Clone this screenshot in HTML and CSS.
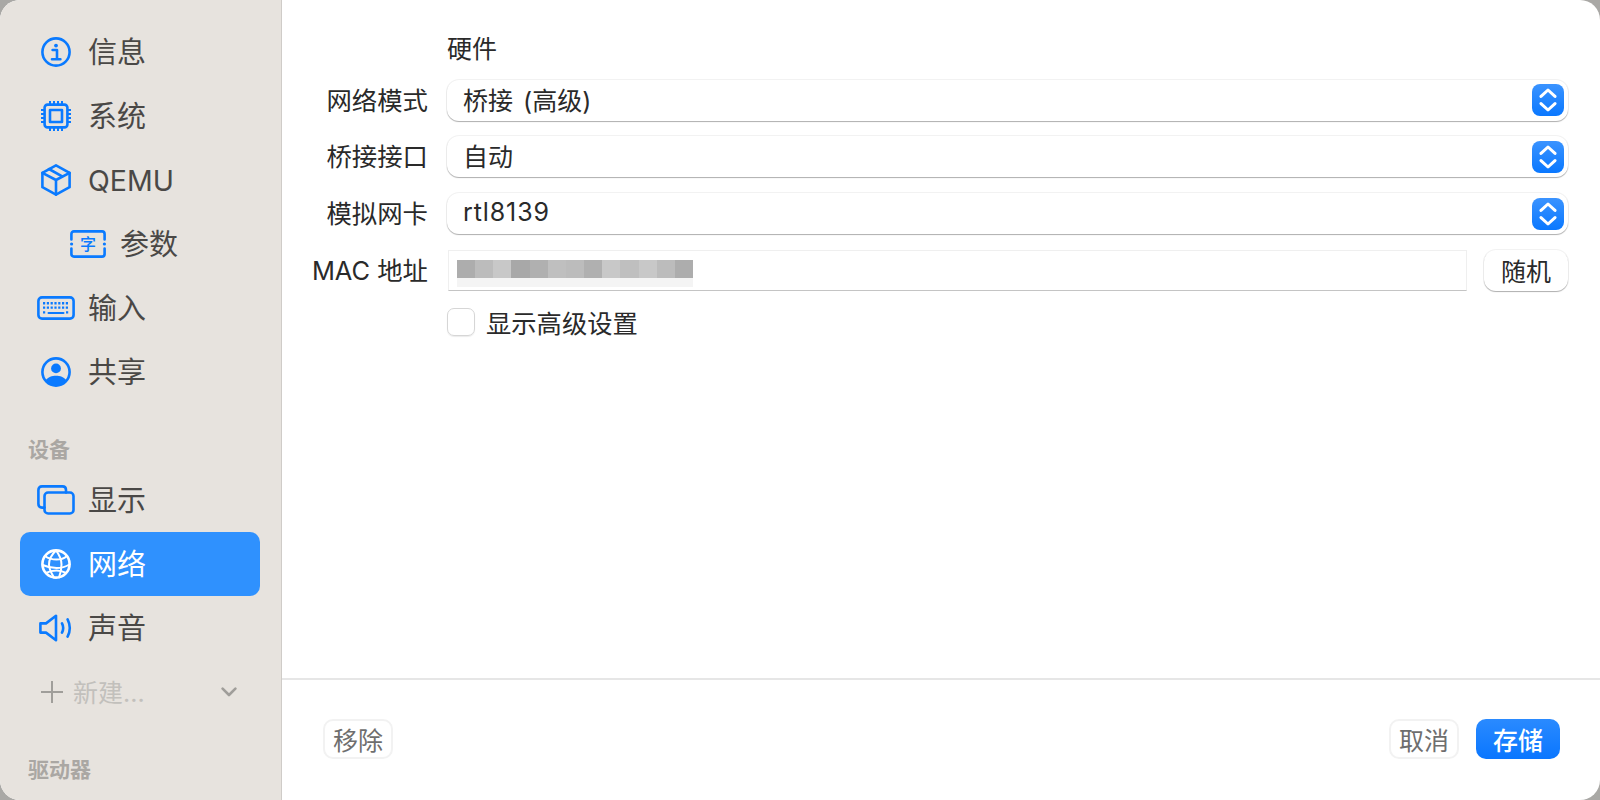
FILE: index.html
```html
<!DOCTYPE html>
<html lang="zh-CN">
<head>
    <meta charset="UTF-8">
    <title>网络</title>
    <link rel="stylesheet" href="styles.css">
</head>
<body>
    <div class="window">
        <div class="sidebar">
            <div class="nav-row">
                <span class="nav-icon">
                    <svg width="30" height="30" viewBox="0 0 30 30">
                        <circle cx="15" cy="15" r="13.6" class="line"/>
                        <circle cx="15" cy="8.6" r="1.9" class="solid"/>
                        <path d="M11.6 13h4.4v9M11 22.2h8.4" class="line"/>
                    </svg>
                </span>
                <span class="nav-text">信息</span>
            </div>
            <div class="nav-row">
                <span class="nav-icon">
                    <svg width="30" height="30" viewBox="0 0 30 30">
                        <rect x="3.6" y="3.6" width="22.8" height="22.8" rx="3" class="line"/>
                        <rect x="9" y="9" width="12" height="12" class="line"/>
                        <path d="M9 0.4v2.6M13 0.4v2.6M17 0.4v2.6M21 0.4v2.6M9 27v2.6M13 27v2.6M17 27v2.6M21 27v2.6M0.4 9h2.6M0.4 13h2.6M0.4 17h2.6M0.4 21h2.6M27 9h2.6M27 13h2.6M27 17h2.6M27 21h2.6" class="line thin"/>
                    </svg>
                </span>
                <span class="nav-text">系统</span>
            </div>
            <div class="nav-row">
                <span class="nav-icon">
                    <svg width="30" height="32" viewBox="0 0 30 32">
                        <path d="M15 1.4 28.6 8.8V23.2L15 30.6 1.4 23.2V8.8Z" class="line"/>
                        <path d="M1.4 8.8 15 16 28.6 8.8M15 16V30.6M8 5 21.6 12.6" class="line"/>
                    </svg>
                </span>
                <span>QEMU</span>
            </div>
            <div class="nav-row sub-row">
                <span class="nav-icon">
                    <svg width="36" height="28" viewBox="0 0 36 28">
                        <path d="M1.4 9.5V4Q1.4 1.4 4 1.4H32Q34.6 1.4 34.6 4V9.5M34.6 18.5V24Q34.6 26.6 32 26.6H4Q1.4 26.6 1.4 24V18.5" class="line"/>
                        <circle cx="1.6" cy="14" r="1.6" class="solid"/>
                        <circle cx="34.4" cy="14" r="1.6" class="solid"/>
                        <text x="18" y="20" class="icon-char">字</text>
                    </svg>
                </span>
                <span class="nav-text">参数</span>
            </div>
            <div class="nav-row">
                <span class="nav-icon">
                    <svg width="38" height="24" viewBox="0 0 38 24">
                        <rect x="1.4" y="1.4" width="35.2" height="21.2" rx="3.6" class="line"/>
                        <path d="M6 7.2h26M6 11.6h26M6 16.4h3M29 16.4h3" class="line dots"/>
                        <path d="M11.5 17h15" class="line thin"/>
                    </svg>
                </span>
                <span class="nav-text">输入</span>
            </div>
            <div class="nav-row">
                <span class="nav-icon">
                    <svg width="30" height="30" viewBox="0 0 30 30">
                        <circle cx="15" cy="15" r="13.6" class="line"/>
                        <circle cx="15" cy="11.4" r="4.9" class="solid"/>
                        <path d="M4.6 23.6C7 20 11 18.8 15 18.8S23 20 25.4 23.6C22.8 26.6 19 28.4 15 28.4S7.2 26.6 4.6 23.6Z" class="solid"/>
                    </svg>
                </span>
                <span class="nav-text">共享</span>
            </div>

            <div class="nav-section">设备</div>

            <div class="nav-row">
                <span class="nav-icon">
                    <svg width="38" height="30" viewBox="0 0 38 30">
                        <path d="M7.5 22.6H5Q1.4 22.6 1.4 19V5Q1.4 1.4 5 1.4H25.5Q29 1.4 29 5V7.5" class="line"/>
                        <rect x="7.5" y="7.5" width="29" height="21" rx="3.6" class="line"/>
                    </svg>
                </span>
                <span class="nav-text">显示</span>
            </div>
            <div class="nav-row active">
                <span class="nav-icon">
                    <svg width="30" height="30" viewBox="0 0 30 30">
                        <circle cx="15" cy="15" r="13.6" class="line"/>
                        <path d="M15 1.4C10 6 8 10.5 8 15.5S10.5 24.5 13 28.6M15 1.4C18.5 6 20.5 10.5 20.5 15.5S19.5 24.5 18 28.4" class="line thin"/>
                        <path d="M4 7C8 10 12 10.6 15.5 10.6S22.5 10 26 7M1.6 16C6 18 11 19 15.5 19S24.5 18 28.4 15.5M5 24C8 22.4 12 21.6 15.5 21.6S22 22.4 25 24" class="line thin"/>
                    </svg>
                </span>
                <span class="nav-text">网络</span>
            </div>
            <div class="nav-row">
                <span class="nav-icon">
                    <svg width="34" height="28" viewBox="0 0 34 28">
                        <path d="M1.4 9.4H7L17 1.8V26.2L7 18.6H1.4Z" class="line"/>
                        <path d="M23 9.4Q25.4 14 23 18.6M28.6 5.4Q33 14 28.6 22.6" class="line"/>
                    </svg>
                </span>
                <span class="nav-text">声音</span>
            </div>
            <div class="nav-row new-row">
                <svg class="plus" width="22" height="22" viewBox="0 0 22 22">
                    <path d="M11 0.5V21.5M0.5 11H21.5" class="line"/>
                </svg>
                <span class="new-text">新建...</span>
                <svg class="chevron" width="16" height="10" viewBox="0 0 16 10">
                    <path d="M1.6 1.6 8 8 14.4 1.6" class="line"/>
                </svg>
            </div>

            <div class="nav-section">驱动器</div>
        </div>

        <div class="main">
            <div class="form">
                <div></div>
                <div class="heading">硬件</div>

                <div class="label">网络模式</div>
                <div class="select">
                    <span class="value">桥接 (高级)</span>
                    <span class="stepper">
                        <svg width="18" height="24" viewBox="0 0 18 24"><path d="M2 8.4 9 2 16 8.4M2 15.6 9 22 16 15.6"/></svg>
                    </span>
                </div>

                <div class="label">桥接接口</div>
                <div class="select">
                    <span class="value">自动</span>
                    <span class="stepper">
                        <svg width="18" height="24" viewBox="0 0 18 24"><path d="M2 8.4 9 2 16 8.4M2 15.6 9 22 16 15.6"/></svg>
                    </span>
                </div>

                <div class="label">模拟网卡</div>
                <div class="select">
                    <span class="value latin">rtl8139</span>
                    <span class="stepper">
                        <svg width="18" height="24" viewBox="0 0 18 24"><path d="M2 8.4 9 2 16 8.4M2 15.6 9 22 16 15.6"/></svg>
                    </span>
                </div>

                <div class="label">MAC 地址</div>
                <div class="mac-row">
                    <div class="mac-field">
                        <div class="mosaic">
                            <i class="c1"></i><i class="c2"></i><i class="c3"></i><i class="c4"></i><i class="c5"></i><i class="c6"></i><i class="c2"></i><i class="c5"></i><i class="c3"></i><i class="c6"></i><i class="c3"></i><i class="c2"></i><i class="c1"></i>
                        </div>
                        <div class="mosaic-shadow"></div>
                    </div>
                    <div class="btn random">随机</div>
                </div>

                <div></div>
                <div class="check-row">
                    <span class="checkbox"></span>
                    <span class="check-text">显示高级设置</span>
                </div>
            </div>

            <div class="footer">
                <div class="btn ghost">移除</div>
                <div class="footer-right">
                    <div class="btn ghost">取消</div>
                    <div class="btn primary">存储</div>
                </div>
            </div>
        </div>
    </div>
</body>
</html>
```
FILE: styles.css
```css
body {
    margin: 0;
    background-color: #a9a8a5;
    font-family: Inter, "Noto Sans CJK SC", sans-serif;
    overflow: hidden;
}

.window {
    display: flex;
    height: 800px;
    border-radius: 20px;
    overflow: hidden;
    background-color: white;
}

/* sidebar */
.sidebar {
    width: 240px;
    flex-shrink: 0;
    padding: 20px 21px 0 20px;
    background-color: #e7e3de;
    border-right: 1px solid #cfccc8;
    color: #4a4846;
    font-size: 28.5px;
}

.nav-row {
    display: flex;
    align-items: center;
    gap: 13px;
    height: 64px;
    padding-left: 17px;
    border-radius: 10px;
    color: #4a4846;
}

.nav-text {
    margin-bottom: 4px;
    font-size: 29px;
}

.nav-row.sub-row {
    padding-left: 49px;
}

.nav-row.active {
    background-color: #2f91fe;
    color: white;
}

.nav-icon {
    display: flex;
    align-items: center;
    justify-content: center;
    width: 38px;
    color: #0a7aff;
}

.active .nav-icon {
    color: white;
}

.nav-section {
    height: 36px;
    padding: 28px 0 0 8px;
    line-height: 36px;
    font-size: 21px;
    font-weight: 700;
    color: #aaa7a3;
}

.line {
    fill: none;
    stroke: currentColor;
    stroke-width: 2.6;
    stroke-linecap: round;
    stroke-linejoin: round;
}

.line.thin {
    stroke-width: 2;
}

.line.dots {
    stroke-width: 2.4;
    stroke-linecap: butt;
    stroke-dasharray: 2.2 1.6;
}

.solid {
    fill: currentColor;
}

.icon-char {
    fill: currentColor;
    font-size: 16px;
    font-weight: 500;
    text-anchor: middle;
}

.new-row {
    padding-left: 21px;
    gap: 10px;
}

.new-row .plus {
    color: #a09e9a;
}

.new-row .plus .line {
    stroke-width: 2;
}

.new-text {
    flex-grow: 1;
    margin-bottom: 2px;
    font-size: 25px;
    color: #c2c0bc;
}

.new-row .chevron {
    margin-right: 23px;
    color: #a09e9a;
}

/* main panel */
.main {
    flex-grow: 1;
    display: flex;
    flex-direction: column;
    min-width: 0;
    color: #2a2a2a;
    font-size: 25px;
}

.form {
    flex-grow: 1;
    display: grid;
    grid-template-columns: 146px 1fr;
    grid-auto-rows: min-content;
    column-gap: 19px;
    row-gap: 15.7px;
    padding: 34px 32px 0 0;
}

.heading {
    height: 30px;
    line-height: 30px;
}

.label {
    height: 41px;
    line-height: 41px;
    text-align: right;
    font-size: 25.4px;
}

.select {
    display: flex;
    align-items: center;
    justify-content: space-between;
    height: 41px;
    padding: 0 4px 0 16px;
    box-sizing: border-box;
    background-color: white;
    border-radius: 12px;
    box-shadow: 0 0 0 1px rgba(0, 0, 0, 0.05), 0 1px 1px rgba(0, 0, 0, 0.28);
}

.value {
    margin-bottom: 3px;
    word-spacing: 3px;
}

.value.latin {
    letter-spacing: 0.9px;
}

.stepper {
    display: flex;
    align-items: center;
    justify-content: center;
    width: 32px;
    height: 32px;
    border-radius: 8px;
    background: linear-gradient(#3a93ff, #0a78ff);
}

.stepper path {
    fill: none;
    stroke: white;
    stroke-width: 3;
    stroke-linecap: round;
    stroke-linejoin: round;
}

.mac-row {
    display: flex;
    gap: 17px;
    height: 41px;
}

.mac-field {
    flex-grow: 1;
    box-sizing: border-box;
    margin-left: 1px;
    padding: 9px 0 0 8px;
    border: 1px solid #efefef;
    border-bottom-color: #c4c4c4;
}

.mosaic {
    display: flex;
    width: 236px;
    height: 18px;
}

.mosaic i {
    flex: 1;
}

.mosaic .c1 { background-color: #adadad; }
.mosaic .c2 { background-color: #bcbcbc; }
.mosaic .c3 { background-color: #c8c8c8; }
.mosaic .c4 { background-color: #a8a8a8; }
.mosaic .c5 { background-color: #b0b0b0; }
.mosaic .c6 { background-color: #bfbfbf; }

.mosaic-shadow {
    width: 236px;
    height: 9px;
    background-color: #f4f4f4;
}

.btn {
    display: flex;
    align-items: center;
    justify-content: center;
    box-sizing: border-box;
    height: 40px;
    border-radius: 10px;
}

.btn.random {
    width: 84px;
    height: 41px;
    border-radius: 12px;
    box-shadow: 0 0 0 1px rgba(0, 0, 0, 0.05), 0 1px 1px rgba(0, 0, 0, 0.28);
}

.check-row {
    display: flex;
    align-items: center;
    gap: 11px;
    height: 28px;
    margin-top: 2px;
    font-size: 25.3px;
}

.checkbox {
    width: 28px;
    height: 28px;
    box-sizing: border-box;
    border: 1px solid #d6d6d6;
    border-radius: 7px;
    box-shadow: 0 1px 1px rgba(0, 0, 0, 0.08);
}

.footer {
    display: flex;
    justify-content: space-between;
    height: 81px;
    padding: 39px 40px 0 41px;
    border-top: 2px solid #e6e6e6;
}

.footer-right {
    display: flex;
    gap: 17px;
}

.btn.ghost {
    width: 70px;
    border: 2px solid #f2f2f2;
    color: #6e6e6e;
}

.btn.primary {
    width: 84px;
    background: linear-gradient(#2a8aff, #0a76ff);
    color: white;
    font-weight: 500;
}
```
